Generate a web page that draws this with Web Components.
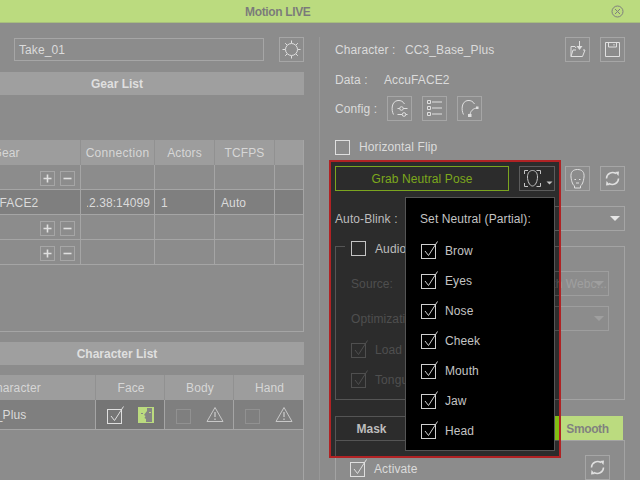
<!DOCTYPE html>
<html><head><meta charset="utf-8"><title>Motion LIVE</title>
<style>html,body{margin:0;background:#2c2c2c}</style>
<script>
const ICONS={
sun:'<circle cx="12.5" cy="12.5" r="6"/><path d="M12.500 3.500v2.500M12.500 19v2.500M3.500 12.500H6M19 12.500h2.500M6.200 6.200l1.800 1.800M17 17l1.800 1.800M18.800 6.200L17 8M8 17l-1.800 1.800"/>',
load:'<path d="M6 19.500V9.500h4l1 1.500M6 19.500h11.500L20 13h-2M6 19.500L8 13h3"/><path d="M14.500 4v5"/><path d="M11.500 9h6l-3 4z" fill="currentColor" stroke="none"/>',
save:'<path d="M5.500 5.500h14v14h-14z"/><path d="M8.500 5.500v4.500h8V5.500M14 7v1.500"/>',
cfg1:'<path d="M6.500 18.500C4 14 4.500 5 11 4.500c3-.2 5 1 6.500 3.500"/><path d="M10.500 12.500h10M10.500 18.500h10"/><circle cx="14.500" cy="12.500" r="1.800" fill="#2c2c2c"/><circle cx="17" cy="18.500" r="1.800" fill="#2c2c2c"/>',
cfg2:'<path d="M5.500 4.500h3v3h-3zM5.500 10.500h3v3h-3zM5.500 16.500h3v3h-3z"/><path d="M10 6h10M10 12h10M10 18h10"/>',
cfg3:'<path d="M6.500 18.500C4 14 4.500 5 11 4.500c3-.2 5 1 6.500 3.500"/><path d="M13 19.500c0-4 3-7.500 7.500-7.500"/><path d="M11 18h3.500v3H11zM19 10.500h2.500v2.500H19z" fill="currentColor" stroke="none"/>',
face:'<path d="M6 11C5.500 6 8 3.500 12.500 3.500S19.500 6 19 11c-.5 5-2 8-3.500 9v2h-6v-2C8 19 6.500 16 6 11z"/><path d="M9.500 13.500h1.500M14 13.500h1.500M11 17h3"/>',
sync:'<path d="M6.500 12.500A6 6 0 0 1 16 7.700" stroke-width="1.500"/><path d="M18.500 12.500A6 6 0 0 1 9 17.300" stroke-width="1.500"/><path d="M15 6l4-.500-.5 4.500zM10 19l-4 .500.5-4.500z" fill="currentColor" stroke="none"/>',
neutral:'<path d="M5.500 8V4.500H9M17.500 4.500H21.500V8M5.500 17v3.500H9M17.500 20.500h4V17"/><path d="M8.500 11c0-4 2-6.500 5-6.500S18.500 7 18.500 11c0 4-2 9-5 9S8.500 15 8.500 11z"/><path d="M27.500 15.500h6l-3 3z" fill="currentColor" stroke="none"/>',
plus:'<path d="M3.500 7.500h8M7.500 3.500v8" stroke-width="1.600"/>',
minus:'<path d="M3.500 7.500h8" stroke-width="1.600"/>',
warn:'<path d="M9 1.500L17 15.500H1z"/><path d="M9 6v5M9 12.500v1.500" stroke-width="1.300"/>'
};
function svg(n,w,h){return `<svg width="${w}" height="${h}" viewBox="0 0 ${w} ${h}" fill="none" stroke="currentColor" stroke-width="1" style="display:block">${ICONS[n]}</svg>`}
function comp(name,render){customElements.define(name,class extends HTMLElement{connectedCallback(){if(this.shadowRoot)return;this.attachShadow({mode:'open'}).innerHTML=render(this)}})}

comp('ml-icon',e=>`<style>:host{display:block;color:inherit}</style>${svg(e.getAttribute('name'),+e.getAttribute('w')||18,+e.getAttribute('h')||17)}`);
comp('ml-button',e=>{const w=+e.getAttribute('w')||25,h=+e.getAttribute('h')||25;return `<style>:host{display:block;flex:none;box-sizing:border-box;width:${w}px;height:${h}px;border:1px solid #5c5c5c;color:#c4c4c4;position:relative}
svg{position:absolute;left:-1px;top:-1px}</style>${svg(e.getAttribute('icon'),w,h)}`});
comp('ml-check',e=>`<style>:host{display:block;flex:none;width:15px;height:15px;color:var(--c,#c4c4c4)}svg{display:block;overflow:visible}</style>
<svg width="15" height="15" viewBox="0 0 15 15" fill="none" stroke="currentColor"><rect x=".5" y=".5" width="14" height="14"/>${e.hasAttribute('checked')?'<path d="M4 7l3.500 4.500L16.500-2.500"/>':''}</svg>`);
comp('ml-bar',e=>`<style>:host{display:flex;align-items:center;justify-content:center;box-sizing:border-box;height:23px;padding-top:1px;background:#4f4f4f;color:#c4c4c4;font-weight:700;letter-spacing:0}</style><slot></slot>`);
comp('ml-select',e=>`<style>:host{display:flex;align-items:center;justify-content:flex-end;box-sizing:border-box;height:25px;border:1px solid var(--b,#5a5a5a);position:relative;color:var(--c,#c4c4c4);white-space:nowrap;overflow:hidden}
i{position:absolute;right:4px;top:9px;border:5px solid transparent;border-top:5px solid var(--a,#d0d0d0);border-bottom:0}
span{padding:2px 1px 0 0}</style><span><slot></slot></span><i></i>`);

comp('ml-titlebar',e=>`<style>:host{display:flex;align-items:center;box-sizing:border-box;height:23px;background:#82bd13;border-bottom:1px solid #5f8a10;color:#0a0a0a;font-weight:700;letter-spacing:-.35px;padding-left:245px;padding-right:16px;justify-content:space-between}
span{padding-top:2px}svg{display:block}</style><span><slot></slot></span>
<svg width="13" height="13" viewBox="0 0 13 13" fill="none" stroke="#111"><circle cx="6.500" cy="6.500" r="5.500"/><path d="M4 4l5 5M9 4l-5 5"/></svg>`);

const add=`<div class="pm"><ml-button w="15" h="15" icon="plus"></ml-button><ml-button w="15" h="15" icon="minus"></ml-button></div>`;
comp('ml-gear-table',e=>`<style>:host{display:block;box-sizing:border-box;height:192px;border-right:1px solid #5a5a5a;border-bottom:1px solid #5a5a5a}
.g{display:grid;grid-template-columns:151px 74px 60px 60px 28px;grid-auto-rows:25px}
.g>div{box-sizing:border-box;border-right:1px solid #5a5a5a;border-bottom:1px solid #5a5a5a;display:flex;align-items:center;white-space:nowrap;overflow:hidden;padding-top:2px}
.g>div:nth-child(5n){border-right:0}
.h{background:#4a4a4a;justify-content:center;color:#b4b4b4;border-bottom:0!important;border-right-color:#343434!important}
.s{background:#141414}
.l{padding-left:6px}
.r{justify-content:flex-end;padding-right:5px}
.c{padding-left:6px}.c span{display:flex;justify-content:flex-end;width:63px;overflow:hidden}
.c b{font-weight:400}
.pm{display:flex;gap:5px}</style>
<div class="g">
<div class="h" style="padding-left:2px">Gear</div><div class="h" style="letter-spacing:.3px">Connection</div><div class="h">Actors</div><div class="h">TCFPS</div><div class="h"></div>
<div class="r">${add}</div><div></div><div></div><div></div><div></div>
<div class="s" style="padding-left:42px;letter-spacing:.2px">AccuFACE2</div><div class="s c"><span><b>192.168.2.38:14099</b></span></div><div class="s l">1</div><div class="s l">Auto</div><div class="s"></div>
<div class="r">${add}</div><div></div><div></div><div></div><div></div>
<div class="r">${add}</div><div></div><div></div><div></div><div></div>
</div>`);
comp('ml-char-table',e=>`<style>:host{display:block;box-sizing:border-box;height:200px;border-right:1px solid #5a5a5a}
.g{display:grid;grid-template-columns:166px 69px 69px 69px;grid-template-rows:25px 30px}
.g>div{box-sizing:border-box;display:flex;align-items:center;border-right:1px solid #5a5a5a;white-space:nowrap}
.g>div:nth-child(4n){border-right:0}
.h{background:#4a4a4a;justify-content:center;color:#b4b4b4;border-right-color:#343434!important;padding:2px 0 0 2px}
.d{background:#141414;border-bottom:1px solid #5a5a5a}
.f{background:#000;padding-left:11px}
.o{padding-left:11px;--c:#343434;color:#9a9a9a}
.o ml-icon{margin-left:15px}
ml-check{margin-top:4px}
.gi{display:block;margin:1px 0 0 16px}</style>
<div class="g"><div class="h" style="padding-left:3px">Character</div><div class="h">Face</div><div class="h">Body</div><div class="h">Hand</div>
<div class="d" style="padding:2px 0 0 7px">CC3_Base_Plus</div>
<div class="d f"><ml-check checked></ml-check>
<svg class="gi" width="16" height="16" viewBox="0 0 16 16"><rect width="16" height="16" fill="#82bd13"/><path d="M9 1h5v14H8v-3L6.500 11 7.500 9 6 8l3-4z" fill="#1c1c1c"/><rect x="11" y="5" width="2" height="1" fill="#82bd13"/><rect x="3" y="6" width="2" height="1" fill="#1c1c1c"/></svg></div>
<div class="d o"><ml-check></ml-check><ml-icon name="warn"></ml-icon></div>
<div class="d o"><ml-check></ml-check><ml-icon name="warn"></ml-icon></div></div>`);

comp('ml-left',e=>`<style>:host{display:block;box-sizing:border-box;width:374px;margin-left:-70px;padding-top:14px}
.t{display:flex;align-items:center;height:25px;gap:15px;padding-left:84px}
.in{box-sizing:border-box;width:250px;height:23px;border:1px solid #5c5c5c;display:flex;align-items:center;padding:2px 0 0 4px}
ml-bar{margin-top:10px}ml-gear-table{margin-top:45px}ml-char-table{margin-top:10px}</style>
<div class="t"><div class="in">Take_01</div><ml-button icon="sun"></ml-button></div>
<ml-bar>Gear List</ml-bar><ml-gear-table></ml-gear-table>
<ml-bar>Character List</ml-bar><ml-char-table></ml-char-table>`);

comp('ml-menu',e=>`<style>:host{display:block;position:absolute;left:74px;top:35px;box-sizing:border-box;width:150px;height:254px;background:#000;border:1px solid #555;color:#c4c4c4;padding:0 0 0 15px}
h4{font:inherit;margin:11px 0 15px -1px;height:20px;line-height:20px}
div{display:flex;align-items:center;height:15px;margin-bottom:15px;gap:9px;--c:#cfcfcf}
</style><h4>Set Neutral (Partial):</h4>
${['Brow','Eyes','Nose','Cheek','Mouth','Jaw','Head'].map(t=>`<div><ml-check checked></ml-check><span>${t}</span></div>`).join('')}`);

comp('ml-right',e=>`<style>:host{display:block;flex:1;box-sizing:border-box;margin-top:14px;border-left:1px solid #414141;padding:0 15px 0 15px;position:relative}
.row{display:flex;align-items:center;height:25px;white-space:nowrap}
.row>span{padding-top:2px}
.push{margin-left:auto}
.bt{display:flex;gap:10px}
.grab{box-sizing:border-box;width:174px;height:25px;padding-top:2px;border:1px solid #7ba51f;color:#7ca81c;display:flex;align-items:center;justify-content:center}
.group{box-sizing:border-box;height:154px;border:1px solid #555;margin-top:15px;padding:0 15px}
.legend{display:flex;align-items:center;gap:9px;width:fit-content;height:15px;margin:-6px 0 0 -6px;padding:0 6px;background:#2c2c2c}
.legend span{padding-top:2px}
.dim{color:#4f4f4f;--c:#4f4f4f;--a:#4f4f4f;--b:#4d4d4d}
.chk{display:flex;align-items:center;gap:9px;height:15px}
.tabs{display:grid;grid-template-columns:72px 73px 72px 71px;height:24px;margin-top:16px;width:288px}
.tabs div{display:flex;align-items:center;justify-content:center;font-weight:700;box-sizing:border-box;padding-top:2px;letter-spacing:0}
.mask{border:1px solid #555;border-bottom:0;border-right:0}
.smooth{background:#82bd13;color:#141414;letter-spacing:-.4px!important}
.plain{border-top:1px solid #555}
.panel{box-sizing:border-box;border:1px solid #555;height:60px;padding:14px 14px 0 14px;width:290px}
.panel .chk{margin-top:4px}
ml-select{margin-left:auto}
.l1{width:70px}.l2{width:49px}.l3{width:52px}
.spot{position:absolute;left:9px;top:123px;width:232px;height:298px;box-sizing:border-box;border:2px solid #b02224;box-shadow:0 0 0 1000px rgba(255,255,255,.46);pointer-events:none}
</style>
<div class="row"><span class="l1">Character :</span><span>CC3_Base_Plus</span><div class="bt push"><ml-button icon="load"></ml-button><ml-button icon="save"></ml-button></div></div>
<div class="row" style="margin-top:5px"><span class="l2">Data :</span><span>AccuFACE2</span></div>
<div class="row" style="margin-top:4px"><span class="l3">Config :</span><div class="bt"><ml-button icon="cfg1"></ml-button><ml-button icon="cfg2"></ml-button><ml-button icon="cfg3"></ml-button></div></div>
<div class="chk" style="margin-top:19px"><ml-check></ml-check><span>Horizontal Flip</span></div>
<div class="row" style="margin-top:11px"><div class="grab">Grab Neutral Pose</div><div class="bt" style="margin-left:10px"><ml-button w="36" icon="neutral"></ml-button><ml-button icon="face"></ml-button><ml-button icon="sync"></ml-button></div></div>
<div class="row" style="margin-top:15px"><span>Auto-Blink :</span><ml-select style="width:200px"></ml-select></div>
<div class="group"><div class="legend"><ml-check></ml-check><span>Audio</span></div>
<div class="row dim" style="margin-top:15px"><span>Source:</span><ml-select style="width:180px">Microphone with Webc...</ml-select></div>
<div class="row dim" style="margin-top:10px"><span>Optimization:</span><ml-select style="width:180px"></ml-select></div>
<div class="chk dim" style="margin-top:12px"><ml-check checked></ml-check><span>Load</span></div>
<div class="chk dim" style="margin-top:15px"><ml-check checked></ml-check><span>Tongue</span></div></div>
<div class="tabs"><div class="mask">Mask</div><div class="plain"></div><div class="plain"></div><div class="smooth">Smooth</div></div>
<div class="panel"><div class="row"><div class="chk"><ml-check checked></ml-check><span>Activate</span></div><ml-button class="push" icon="sync"></ml-button></div></div>
<div class="spot"><ml-menu></ml-menu></div>`);

comp('motion-live',e=>`<style>:host{display:block;position:relative;width:640px;height:480px;overflow:hidden;background:#2c2c2c;color:#bdbdbd;font:12px/1.2 "Liberation Sans",Arial,sans-serif;letter-spacing:.1px}
.b{display:flex;gap:15px}</style><ml-titlebar>Motion LIVE</ml-titlebar><div class="b"><ml-left></ml-left><ml-right></ml-right></div>`);
</script></head><body><motion-live></motion-live></body></html>
